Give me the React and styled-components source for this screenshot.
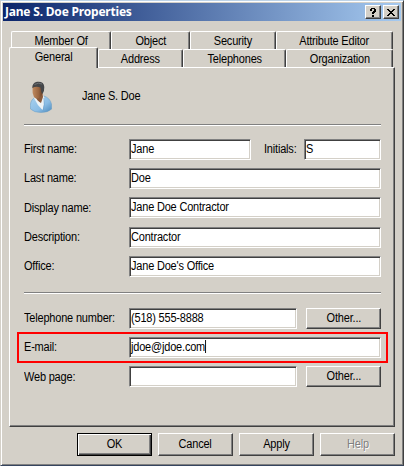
import React from "react";
import styled, { createGlobalStyle, css } from "styled-components";

const face = "#d4d0c8";

const GlobalStyle = createGlobalStyle`
  * { box-sizing: border-box; }
  body {
    margin: 0;
    background: ${face};
    font-family: "Liberation Sans", Arial, sans-serif;
    font-size: 12px;
    color: #000;
    overflow: hidden;
  }
`;

const Window = styled.div`
  width: 404px;
  height: 466px;
  background: ${face};
  border: 1px solid;
  border-color: #bdd3e8 #404040 #36455f #d4d0c8;
  box-shadow: inset 1px 1px #fff, inset -1px -1px #808080;
  padding: 2px;
`;

const TitleBar = styled.header`
  display: flex;
  align-items: center;
  height: 18px;
  padding: 0 2px;
  background: linear-gradient(to right, #0a246a, #a6caf0);
`;

const Title = styled.h1`
  margin: 0;
  flex: 1;
  font: bold 12px/18px "Noto Sans", sans-serif;
  letter-spacing: -0.2px;
  color: #fff;
  white-space: nowrap;
`;

const raised = css`
  background: ${face};
  border: 1px solid;
  border-color: #fff #404040 #404040 #fff;
  box-shadow: inset -1px -1px #808080;
`;

const CaptionButton = styled.button`
  ${raised}
  display: flex;
  align-items: center;
  justify-content: center;
  width: 16px;
  height: 14px;
  margin-left: 2px;
  padding: 0;
`;

const Text = styled.span`
  display: inline-block;
  letter-spacing: -0.2px;
  transform: scaleX(0.915);
  transform-origin: left;
  white-space: nowrap;
`;

const TabArea = styled.nav`
  padding: 10px 0 0 6px;
`;

const TabRow = styled.div`
  display: flex;
  height: 18px;
  padding-left: ${(p) => p.$indent}px;
`;

const Tab = styled.div`
  position: relative;
  width: ${(p) => p.$w}px;
  height: 18px;
  border-top: 1px solid #fff;
  border-left: 1px solid #fff;
  border-right: 1px solid #404040;
  border-radius: 2px 2px 0 0;
  box-shadow: inset -1px 0 #808080;
  background: ${face};
  text-align: center;
  line-height: 18px;

  ${Text} { transform-origin: center; }

  ${(p) =>
    p.$active &&
    css`
      height: 21px;
      margin-top: -2px;
      z-index: 1;
    `}
`;

const Page = styled.main`
  width: 386px;
  height: 360px;
  margin-left: 6px;
  padding: 13px 12px 0 14px;
  border: 1px solid;
  border-color: #fff #404040 #404040 #fff;
  box-shadow: inset -1px -1px #808080;
`;

const Identity = styled.div`
  display: flex;
  align-items: center;
  height: 32px;
  gap: 30px;
  padding-left: 6px;

  ${Text} { margin-bottom: 2px; }
`;

const Rule = styled.hr`
  height: 2px;
  width: 357px;
  margin: ${(p) => p.$m};
  border: 0;
  border-top: 1px solid #808080;
  border-bottom: 1px solid #fff;
`;

const Row = styled.div`
  display: flex;
  align-items: center;
  width: 357px;
  height: 21px;
  margin-top: ${(p) => p.$gap ?? 8}px;
`;

const Label = styled.label`
  width: ${(p) => p.$w ?? 105}px;
  height: 21px;
  padding-left: ${(p) => p.$pl ?? 0}px;
  line-height: ${(p) => (p.$low ? 22 : 20)}px;
`;

const Field = styled.div`
  display: flex;
  align-items: center;
  width: ${(p) => p.$w ?? 252}px;
  height: 21px;
  padding: 0 1px 2px;
  background: #fff;
  border: 1px solid;
  border-color: #808080 #fff #fff #808080;
  box-shadow: inset 1px 1px #404040, inset -1px -1px ${face};
`;

const Caret = styled.span`
  display: inline-block;
  width: 1px;
  height: 13px;
  vertical-align: -2px;
  background: #000;
`;

const Highlight = styled.div`
  width: 371px;
  height: 31px;
  margin: 3px 0 -5px -7px;
  padding: 3px 5px;
  border: 2px solid #f00;

  ${Row} { margin-top: 0; }
`;

const Button = styled.button`
  ${raised}
  width: 75px;
  height: ${(p) => p.$h ?? 23}px;
  margin-left: ${(p) => p.$ml ?? 0}px;
  padding: 0;
  font: inherit;
  color: #000;
  line-height: 19px;

  ${Text} { transform-origin: center; }

  ${(p) =>
    p.$primary &&
    css`
      border-color: #000;
      box-shadow: inset 1px 1px #fff, inset -1px -1px #404040, inset -2px -2px #808080;
    `}
  &:disabled {
    color: #808080;
    text-shadow: 1px 1px #fff;
  }
`;

const Footer = styled.footer`
  display: flex;
  justify-content: flex-end;
  gap: 6px;
  padding: 6px 6px 0 0;
`;

const UserIcon = () => (
  <svg width="22" height="32" viewBox="0 0 22 32">
    <defs>
      <linearGradient id="shirt" x1="0" y1="0" x2="1" y2="1">
        <stop offset="0" stopColor="#a9d2f0" />
        <stop offset=".6" stopColor="#8bbde5" />
        <stop offset="1" stopColor="#4a88bb" />
      </linearGradient>
      <linearGradient id="skin" x1="0" y1="0" x2="1" y2="0">
        <stop offset="0" stopColor="#c08a5f" />
        <stop offset=".6" stopColor="#996541" />
        <stop offset="1" stopColor="#5e3a25" />
      </linearGradient>
    </defs>
    <path d="M0.500 28 Q-0.500 20 4 17 L14 15 Q20 17 21.500 23 L21.700 28 Q18 31.500 11 31.500 Q4 31.500 0.500 28Z" fill="url(#shirt)" stroke="#6b9cc2" strokeWidth=".5" />
    <path d="M4 17 L6 15 L13 14 L14.500 17 L14 24 L12.500 29 Q7 24 4 17Z" fill="#edf3f6" />
    <path d="M5 15 L12.500 12 L13 16 L11 22 Q7 20 5 15Z" fill="#8a5a3b" />
    <path d="M2.500 6 Q4 3 9 3 Q13 5 13 10 Q12 15 9 17 Q6 18.500 4 16 Q2 12 2.500 6Z" fill="url(#skin)" />
    <path d="M2.300 7 Q2 2 7 0.800 Q14 0 14.300 6 Q14.500 10 12.500 13 L11.300 11 L10.500 6.500 Q6 5 2.300 7Z" fill="#45474a" />
    <path d="M4.500 3.500 Q8.500 1.200 12 3" fill="none" stroke="#6d7073" />
    <path d="M14 17 Q15 23 13 31" fill="none" stroke="#6fa5d0" strokeWidth=".8" />
  </svg>
);

export default function App() {
  return (
    <>
      <GlobalStyle />
      <Window>
        <TitleBar>
          <Title>Jane S. Doe Properties</Title>
          <CaptionButton aria-label="Help">
            <svg width="8" height="9" viewBox="0 0 8 9" shapeRendering="crispEdges">
              <path d="M2 0h4v1h1v3h-1v1h-1v1h-2v-2h1v-1h1v-2h-2v2h-2v-2h1zM3 7h2v2h-2z" />
            </svg>
          </CaptionButton>
          <CaptionButton aria-label="Close">
            <svg width="8" height="7" viewBox="0 0 8 7" shapeRendering="crispEdges">
              <path d="M0 0h2v1h1v1h2v-1h1v-1h2v1h-1v1h-1v1h-1v1h1v1h1v1h1v1h-2v-1h-1v-1h-2v1h-1v1h-2v-1h1v-1h1v-1h1v-1h-1v-1h-1v-1h-1z" />
            </svg>
          </CaptionButton>
        </TitleBar>
        <TabArea>
          <TabRow $indent={2}>
            <Tab $w={100}><Text>Member Of</Text></Tab>
            <Tab $w={79}><Text>Object</Text></Tab>
            <Tab $w={86}><Text>Security</Text></Tab>
            <Tab $w={117}><Text>Attribute Editor</Text></Tab>
          </TabRow>
          <TabRow $indent={0}>
            <Tab $w={89} $active><Text>General</Text></Tab>
            <Tab $w={85}><Text>Address</Text></Tab>
            <Tab $w={103}><Text>Telephones</Text></Tab>
            <Tab $w={107}><Text>Organization</Text></Tab>
          </TabRow>
        </TabArea>
        <Page>
          <Identity>
            <UserIcon />
            <Text>Jane S. Doe</Text>
          </Identity>
          <Rule $m="11px 0 13px" />
          <Row $gap={0}>
            <Label><Text>First name:</Text></Label>
            <Field $w={122}><Text>Jane</Text></Field>
            <Label $w={53} $pl={13}><Text>Initials:</Text></Label>
            <Field $w={77}><Text>S</Text></Field>
          </Row>
          <Row>
            <Label><Text>Last name:</Text></Label>
            <Field><Text>Doe</Text></Field>
          </Row>
          <Row>
            <Label $low><Text>Display name:</Text></Label>
            <Field><Text>Jane Doe Contractor</Text></Field>
          </Row>
          <Row $gap={9}>
            <Label><Text>Description:</Text></Label>
            <Field><Text>Contractor</Text></Field>
          </Row>
          <Row>
            <Label><Text>Office:</Text></Label>
            <Field><Text>Jane Doe's Office</Text></Field>
          </Row>
          <Rule $m="15px 0 14px" />
          <Row $gap={0}>
            <Label><Text>Telephone number:</Text></Label>
            <Field $w={168}><Text>(518) 555-8888</Text></Field>
            <Button $h={21} $ml={9}><Text>Other...</Text></Button>
          </Row>
          <Highlight>
            <Row>
              <Label><Text>E-mail:</Text></Label>
              <Field><Text>jdoe@jdoe.com<Caret /></Text></Field>
            </Row>
          </Highlight>
          <Row>
            <Label $low><Text>Web page:</Text></Label>
            <Field $w={168} />
            <Button $h={21} $ml={9}><Text>Other...</Text></Button>
          </Row>
        </Page>
        <Footer>
          <Button $primary><Text>OK</Text></Button>
          <Button><Text>Cancel</Text></Button>
          <Button><Text>Apply</Text></Button>
          <Button disabled><Text>Help</Text></Button>
        </Footer>
      </Window>
    </>
  );
}
